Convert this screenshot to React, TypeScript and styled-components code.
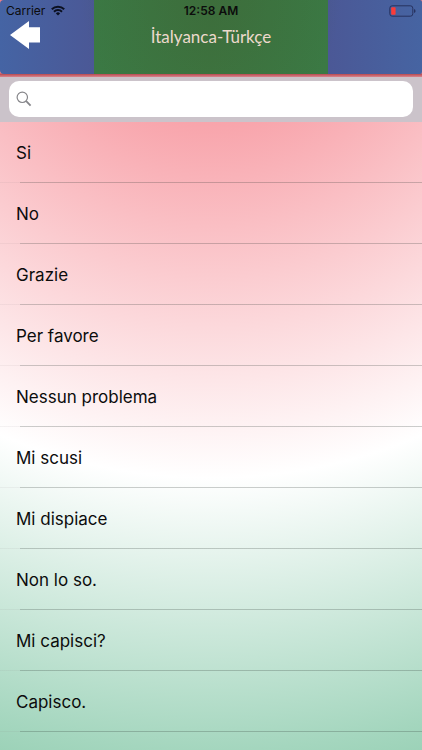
import React, { useState } from "react";
import styled, { createGlobalStyle } from "styled-components";

const phrases = [
  "Si",
  "No",
  "Grazie",
  "Per favore",
  "Nessun problema",
  "Mi scusi",
  "Mi dispiace",
  "Non lo so.",
  "Mi capisci?",
  "Capisco.",
];

const GlobalStyle = createGlobalStyle`
  *, *::before, *::after { box-sizing: border-box; }
  body {
    margin: 0;
    font-family: Inter, "Liberation Sans", sans-serif;
    color: #0c0c0c;
  }
`;

const Screen = styled.div`
  min-height: 100vh;
  display: flex;
  flex-direction: column;
  background: radial-gradient(
    circle 900px at 50% -60px,
    #f58089 0,
    #f8a5ac 185px,
    #ffffff 538px,
    #a4d6be 810px,
    #8ac9aa 900px
  );
`;

const Header = styled.header`
  height: 77px;
  padding-bottom: 3px;
  background: linear-gradient(#ee8089 0, #ee8089 73px, #b84a50 74px, #d9848d 77px);
`;

const FlagBar = styled.div`
  height: 100%;
  border-radius: 4px 2px 2px 4px;
  background:
    radial-gradient(circle at 50% 0, rgba(60, 92, 50, 0.35), rgba(60, 92, 50, 0) 130px),
    linear-gradient(
      to right,
      #4564a4 0%,
      #4b5896 22.3%,
      #3b7944 22.3%,
      #3d7640 50%,
      #3b7944 77.8%,
      #4b5896 77.8%,
      #4664a2 100%
    );
`;

const StatusBar = styled.div`
  display: grid;
  grid-template-columns: 1fr auto 1fr;
  align-items: center;
  height: 21px;
  padding: 0 6px;
  font-size: 12px;
  line-height: 21px;
`;

const Carrier = styled.span`
  display: flex;
  align-items: center;
  gap: 6px;
`;

const Clock = styled.time`
  font-weight: 600;
`;

const BatteryIcon = styled.svg`
  justify-self: end;
`;

const NavBar = styled.nav`
  display: grid;
  grid-template-columns: 1fr auto 1fr;
  align-items: start;
  padding: 0 10px;
`;

const BackButton = styled.button`
  justify-self: start;
  display: flex;
  margin: 0;
  padding: 0;
  border: 0;
  background: none;
  cursor: pointer;
`;

const Title = styled.h1`
  margin: 0;
  font-family: Lato, sans-serif;
  font-size: 17px;
  font-weight: 400;
  line-height: 32px;
  color: #ecd9cc;
`;

const SearchBar = styled.form`
  padding: 4px 9px 5px;
  background: #cbc3ca;
`;

const SearchField = styled.label`
  display: flex;
  align-items: center;
  gap: 8px;
  height: 36px;
  padding: 0 7px;
  border-radius: 10px;
  background: #fff;
`;

const SearchInput = styled.input`
  flex: 1;
  min-width: 0;
  border: 0;
  outline: 0;
  background: none;
  font: inherit;
  font-size: 16px;
`;

const PhraseList = styled.ul`
  margin: 0;
  padding: 0;
  list-style: none;
`;

const PhraseRow = styled.li`
  height: 61px;
  padding: 1px 16px 0;
  font-size: 17px;
  line-height: 60px;
  background:
    linear-gradient(
        to right,
        rgba(120, 110, 115, 0.08) 20px,
        rgba(40, 50, 45, 0.24) 20px
      )
      bottom / 100% 1px no-repeat;
`;

export default function App() {
  const [query, setQuery] = useState("");
  const shown = phrases.filter((p) =>
    p.toLowerCase().includes(query.trim().toLowerCase()),
  );

  return (
    <>
      <GlobalStyle />
      <Screen>
        <Header>
          <FlagBar>
            <StatusBar>
              <Carrier>
                Carrier
                <svg width="14" height="11" viewBox="0 0 14 11" aria-hidden="true">
                  <g fill="none" stroke="#0b1020" strokeWidth="2">
                    <path d="M0.8 4.2 A8.8 8.8 0 0 1 13.2 4.2" />
                    <path d="M3 6.7 A5.7 5.7 0 0 1 11 6.7" />
                  </g>
                  <path d="M4.9 8.4 A3 3 0 0 1 9.1 8.4 L7 10.6 Z" fill="#0b1020" />
                </svg>
              </Carrier>
              <Clock>12:58 AM</Clock>
              <BatteryIcon width="27" height="12" viewBox="0 0 27 12" role="img" aria-label="Battery low">
                <rect x="0.8" y="0.8" width="23" height="10.4" rx="2.4" fill="none" stroke="#27325f" />
                <rect x="2.2" y="2.2" width="4.4" height="7.6" rx="0.8" fill="#fb3b38" />
                <path d="M25 4 Q26.6 4.6 26.6 6 Q26.6 7.4 25 8 Z" fill="#27325f" />
              </BatteryIcon>
            </StatusBar>
            <NavBar>
              <BackButton type="button" aria-label="Back">
                <svg width="31" height="29" viewBox="0 0 31 29" aria-hidden="true">
                  <path d="M0 14 L19 0 V6.3 H30 V21.5 H19 V28 Z" fill="#fff" />
                </svg>
              </BackButton>
              <Title>İtalyanca-Türkçe</Title>
            </NavBar>
          </FlagBar>
        </Header>
        <SearchBar role="search" onSubmit={(e) => e.preventDefault()}>
          <SearchField>
            <svg width="16" height="16" viewBox="0 0 16 16" fill="none" stroke="#858589" aria-hidden="true">
              <circle cx="6.3" cy="6.3" r="5.2" strokeWidth="1.2" />
              <path d="M10.2 10.2 L14.6 14.6" strokeWidth="1.8" />
            </svg>
            <SearchInput
              type="text"
              aria-label="Search"
              value={query}
              onChange={(e) => setQuery(e.target.value)}
            />
          </SearchField>
        </SearchBar>
        <PhraseList>
          {shown.map((p) => (
            <PhraseRow key={p}>{p}</PhraseRow>
          ))}
        </PhraseList>
      </Screen>
    </>
  );
}
